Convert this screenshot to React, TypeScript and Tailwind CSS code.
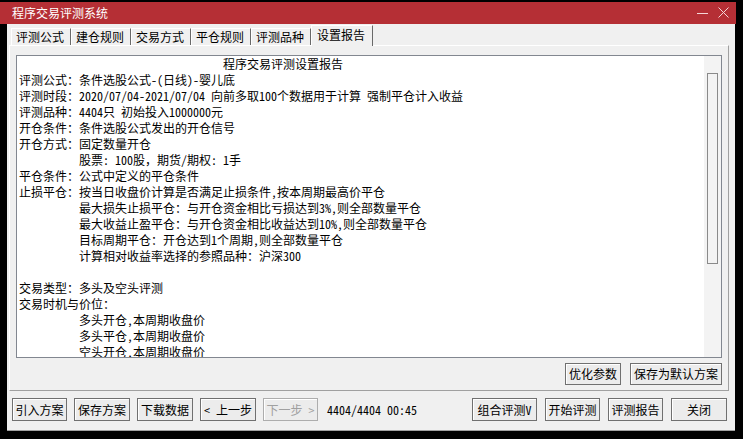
import React from 'react';

const reportLines: { indent: string; text: string }[] = [
  { indent: 'pl-[204px]', text: '程序交易评测设置报告' },
  { indent: '', text: '评测公式：条件选股公式-(日线)-婴儿底' },
  { indent: '', text: '评测时段：2020/07/04-2021/07/04 向前多取100个数据用于计算 强制平仓计入收益' },
  { indent: '', text: '评测品种：4404只 初始投入1000000元' },
  { indent: '', text: '开仓条件：条件选股公式发出的开仓信号' },
  { indent: '', text: '开仓方式：固定数量开仓' },
  { indent: 'pl-[60px]', text: '股票: 100股，期货/期权: 1手' },
  { indent: '', text: '平仓条件：公式中定义的平仓条件' },
  { indent: '', text: '止损平仓：按当日收盘价计算是否满足止损条件,按本周期最高价平仓' },
  { indent: 'pl-[60px]', text: '最大损失止损平仓：与开仓资金相比亏损达到3%,则全部数量平仓' },
  { indent: 'pl-[60px]', text: '最大收益止盈平仓：与开仓资金相比收益达到10%,则全部数量平仓' },
  { indent: 'pl-[60px]', text: '目标周期平仓：开仓达到1个周期,则全部数量平仓' },
  { indent: 'pl-[60px]', text: '计算相对收益率选择的参照品种：沪深300' },
  { indent: '', text: '' },
  { indent: '', text: '交易类型：多头及空头评测' },
  { indent: '', text: '交易时机与价位：' },
  { indent: 'pl-[60px]', text: '多头开仓,本周期收盘价' },
  { indent: 'pl-[60px]', text: '多头平仓,本周期收盘价' },
  { indent: 'pl-[60px]', text: '空头开仓,本周期收盘价' },
];

const tabs = ['评测公式', '建仓规则', '交易方式', '平仓规则', '评测品种', '设置报告'];

function Btn({ label, w, disabled }: { label: string; w: string; disabled?: boolean }) {
  return (
    <div
      className={`${w} h-full flex items-center justify-center border ${
        disabled ? 'border-[#adadad] text-[#a0a0a0]' : 'border-[#707070] text-black'
      } bg-[#ececec] shadow-[inset_1px_1px_0_#ffffff]`}
    >
      {label}
    </div>
  );
}

export default function App() {
  return (
    <div className="w-[743px] h-[439px] bg-black overflow-hidden text-[12px] leading-none font-[family-name:'Noto_Sans_Mono_CJK_SC','Noto_Sans_CJK_SC',sans-serif]">
      {/* title bar */}
      <div className="mt-[2px] w-[736px] h-[22px] bg-[#b52f35] flex items-center pl-[12px] text-white">
        <span>程序交易评测系统</span>
        <div className="ml-auto flex items-center gap-[9px] pr-[6px]">
          <svg width="12" height="12" viewBox="0 0 12 12">
            <line x1="0" y1="6.5" x2="11" y2="6.5" stroke="#f4d6d7" strokeWidth="1" />
          </svg>
          <svg width="12" height="12" viewBox="0 0 12 12">
            <line x1="0.5" y1="0.5" x2="10.5" y2="10.5" stroke="#f4d6d7" strokeWidth="1" />
            <line x1="10.5" y1="0.5" x2="0.5" y2="10.5" stroke="#f4d6d7" strokeWidth="1" />
          </svg>
        </div>
      </div>

      {/* window body */}
      <div className="ml-[7px] w-[728px] h-[407px] bg-[#f0f0f0] flex flex-col border-b border-[#a0a0a0]">
        {/* tabs */}
        <div className="h-[21px] flex items-end pl-[4px] relative z-10">
          {tabs.map((t, i) => {
            const active = i === tabs.length - 1;
            return (
              <div
                key={t}
                className={`${
                  active ? 'h-[21px] w-[62px] -mb-[1px] pl-[5px] pt-[3px]' : 'h-[17px] w-[60px] pl-[4px] pt-[2px]'
                } bg-[#f0f0f0] border-l border-t border-white border-r border-r-[#696969] text-black`}
              >
                {t}
              </div>
            );
          })}
        </div>

        {/* tab panel */}
        <div className="ml-[2px] w-[720px] h-[346px] border-t border-l border-white border-r border-b border-r-[#a0a0a0] border-b-[#a0a0a0] flex flex-col pl-[6px] pt-[9px]">
          <div className="w-[706px] h-[303px] border border-[#828790] bg-white flex">
            <div className="flex-1 overflow-hidden pl-[2px] text-black">
              {reportLines.map((l, i) => (
                <div key={i} className={`h-[16px] leading-[16px] whitespace-pre ${l.indent}`}>
                  {l.text}
                </div>
              ))}
            </div>
            <div className="w-[17px] h-full bg-[#f3f3f3] pt-[17px] pl-[3px]">
              <div className="w-[11px] h-[191px] border border-[#8a8a8a] bg-[#f3f3f3]" />
            </div>
          </div>
          <div className="w-[706px] h-[22px] mt-[5px] flex justify-end gap-[9px]">
            <Btn label="优化参数" w="w-[56px]" />
            <Btn label="保存为默认方案" w="w-[92px]" />
          </div>
        </div>

        {/* bottom bar */}
        <div className="h-[23px] mt-[7px] flex items-center pl-[5px] pr-[8px]">
          <div className="h-full flex gap-[7px]">
            <Btn label="引入方案" w="w-[55px]" />
            <Btn label="保存方案" w="w-[56px]" />
            <Btn label="下载数据" w="w-[56px]" />
            <Btn label="< 上一步" w="w-[56px]" />
            <Btn label="下一步 >" w="w-[55px]" disabled />
          </div>
          <span className="ml-[9px] whitespace-pre text-black">4404/4404 00:45</span>
          <div className="ml-auto h-full flex gap-[8px]">
            <Btn label="组合评测V" w="w-[65px]" />
            <Btn label="开始评测" w="w-[55px]" />
            <Btn label="评测报告" w="w-[55px]" />
            <Btn label="关闭" w="w-[56px]" />
          </div>
        </div>
      </div>
    </div>
  );
}
